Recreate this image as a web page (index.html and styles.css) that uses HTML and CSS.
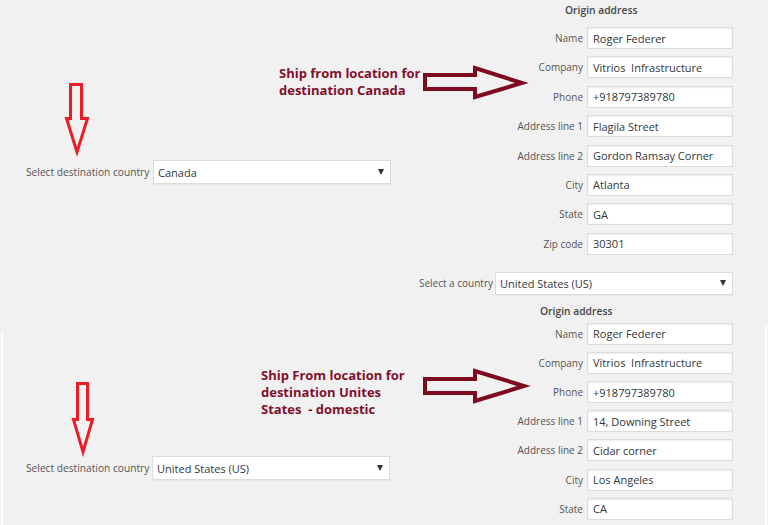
FILE: index.html
```html
<!DOCTYPE html>
<html lang="en">
<head>
<meta charset="utf-8">
<title>Ship from locations</title>
<link rel="stylesheet" href="styles.css">
</head>
<body>
<main class="page">
  <div class="dest-col">
    <div class="dest dest-first">
      <span class="dest-label">Select destination country</span>
      <div class="select"><span>Canada</span><i class="caret"></i></div>
    </div>
    <div class="dest dest-second">
      <span class="dest-label">Select destination country</span>
      <div class="select"><span>United States (US)</span><i class="caret"></i></div>
    </div>
  </div>

  <div class="form-col">
    <section class="origin origin-first">
      <h3 class="origin-title">Origin address</h3>
      <div class="origin-grid">
        <label class="field-label">Name</label><input class="field" type="text" value="Roger Federer">
        <label class="field-label">Company</label><input class="field" type="text" value="Vitrios  Infrastructure">
        <label class="field-label">Phone</label><input class="field" type="text" value="+918797389780">
        <label class="field-label">Address line 1</label><input class="field" type="text" value="Flagila Street">
        <label class="field-label">Address line 2</label><input class="field" type="text" value="Gordon Ramsay Corner">
        <label class="field-label">City</label><input class="field" type="text" value="Atlanta">
        <label class="field-label">State</label><input class="field" type="text" value="GA">
        <label class="field-label">Zip code</label><input class="field" type="text" value="30301">
      </div>
    </section>

    <div class="country-row">
      <span class="field-label">Select a country</span>
      <div class="select select-country"><span>United States (US)</span><i class="caret"></i></div>
    </div>

    <section class="origin origin-second">
      <h3 class="origin-title">Origin address</h3>
      <div class="origin-grid">
        <label class="field-label">Name</label><input class="field" type="text" value="Roger Federer">
        <label class="field-label">Company</label><input class="field" type="text" value="Vitrios  Infrastructure">
        <label class="field-label">Phone</label><input class="field" type="text" value="+918797389780">
        <label class="field-label">Address line 1</label><input class="field" type="text" value="14, Downing Street">
        <label class="field-label">Address line 2</label><input class="field" type="text" value="Cidar corner">
        <label class="field-label">City</label><input class="field" type="text" value="Los Angeles">
        <label class="field-label">State</label><input class="field" type="text" value="CA">
      </div>
    </section>
  </div>

  <div class="seam seam-left"></div>
  <div class="seam seam-right"></div>

  <div class="callout callout-canada">Ship from location for<br>destination Canada</div>
  <div class="callout callout-us">Ship From location for<br>destination Unites<br>States&nbsp; - domestic</div>

  <svg class="arrows" width="768" height="525" viewBox="0 0 768 525" aria-hidden="true">
    <path class="arrow-red" d="M70.5 84.5 H81.5 V118.5 H87.5 L77 152 L66.5 118.5 H70.5 Z"/>
    <path class="arrow-red" d="M77.5 383.5 H87.5 V419.5 H92.5 L83 452 L73.5 419.5 H77.5 Z"/>
    <path class="arrow-dark" d="M425 75 H475 V68 L522 83 L475 97 V89 H425 Z"/>
    <path class="arrow-dark" d="M425 379 H475 V371 L524 386 L475 401 V393 H425 Z"/>
  </svg>
</main>
</body>
</html>
```

FILE: styles.css
```css
* {
  box-sizing: border-box;
}

html,
body {
  margin: 0;
  padding: 0;
}

body {
  background: #f1f1f1;
  font-family: "Open Sans", "Noto Sans", sans-serif;
  color: #555;
  overflow: hidden;
}

.page {
  position: relative;
  width: 768px;
  height: 525px;
  display: grid;
  grid-template-columns: 391px 342px;
  align-items: start;
}

/* left column: destination selects */
.dest-col {
  display: flex;
  flex-direction: column;
}

.dest {
  display: flex;
  align-items: center;
  gap: 2px;
  padding-left: 26px;
}

.dest-first {
  margin-top: 160px;
}

.dest-second {
  margin-top: 272px;
}

.dest-second .dest-label {
  width: 124px;
}

.dest-label {
  flex: none;
  width: 125px;
  font-size: 10.2px;
  color: #555;
  white-space: nowrap;
}

.select {
  width: 238px;
  height: 24px;
  flex: none;
  background: #fff;
  border: 1px solid #dcdcdc;
  box-shadow: 0 1px 1px rgba(0, 0, 0, 0.04);
  display: flex;
  align-items: center;
  justify-content: space-between;
  padding: 0 6px 0 4px;
  font-size: 11px;
  color: #32373c;
}

.select-country {
  height: 23px;
}

.caret {
  width: 0;
  height: 0;
  border-left: 3px solid transparent;
  border-right: 3px solid transparent;
  border-top: 6px solid #333;
}

/* right column: origin address forms */
.form-col {
  display: flex;
  flex-direction: column;
  align-items: flex-end;
}

.origin {
  width: 217px;
  display: flex;
  flex-direction: column;
}

.origin-title {
  margin: 0;
  font-size: 10.3px;
  font-weight: 600;
  line-height: 16px;
  color: #444;
}

.origin-first {
  margin-top: 2px;
}

.origin-first .origin-title {
  padding-left: 49px;
  margin-bottom: 9px;
}

.origin-second {
  margin-top: 8px;
}

.origin-second .origin-title {
  padding-left: 24px;
  margin-bottom: 4px;
}

.origin-grid {
  display: grid;
  grid-template-columns: 67px 146px;
  column-gap: 4px;
  row-gap: 7.4px;
  align-items: center;
}

.origin-second .origin-grid {
  row-gap: 7.2px;
}

.field-label {
  font-size: 10px;
  color: #555;
  text-align: right;
  white-space: nowrap;
}

.field {
  width: 146px;
  height: 22px;
  margin: 0;
  padding: 0 5px;
  border: 1px solid #dcdcdc;
  box-shadow: inset 0 1px 2px rgba(0, 0, 0, 0.07);
  background: #fff;
  font-family: "Open Sans", "Noto Sans", sans-serif;
  font-size: 11px;
  color: #32373c;
  outline: none;
}

.country-row {
  margin-top: 17px;
  display: flex;
  align-items: center;
  gap: 2px;
}

/* paste seams of the second screenshot */
.seam {
  position: absolute;
  background: #fff;
  bottom: 0;
}

.seam-left {
  left: 1px;
  top: 332px;
  width: 2px;
}

.seam-right {
  left: 765px;
  top: 325px;
  width: 2px;
}

/* annotations */
.callout {
  position: absolute;
  font-family: "Open Sans", "Noto Sans", sans-serif;
  font-weight: 700;
  font-size: 13px;
  line-height: 17px;
  color: #80102a;
  white-space: nowrap;
}

.callout-canada {
  left: 279px;
  top: 65px;
}

.callout-us {
  left: 261px;
  top: 367px;
}

.arrows {
  position: absolute;
  left: 0;
  top: 0;
  pointer-events: none;
}

.arrow-red {
  fill: none;
  stroke: #ed1c24;
  stroke-width: 3;
  stroke-linejoin: miter;
}

.arrow-dark {
  fill: none;
  stroke: #7d0a1e;
  stroke-width: 4;
  stroke-linejoin: miter;
}
```
